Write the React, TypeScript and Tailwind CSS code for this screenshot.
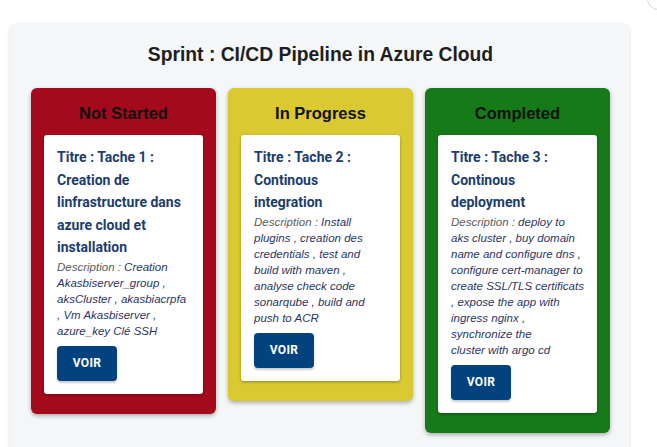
const columns = [
  {
    name: 'Not Started',
    bg: 'bg-[#a50a1c]',
    task: {
      title: 'Titre : Tache 1 : Creation de linfrastructure dans azure cloud et installation',
      desc: ['Creation Akasbiserver_group , aksCluster , akasbiacrpfa , Vm Akasbiserver , azure_key Clé SSH'],
    },
  },
  {
    name: 'In Progress',
    bg: 'bg-[#dbc932]',
    task: {
      title: 'Titre : Tache 2 : Continous integration',
      desc: ['Install plugins , creation des credentials , test and build with maven , analyse check code sonarqube , build and push to ACR'],
    },
  },
  {
    name: 'Completed',
    bg: 'bg-[#167a19]',
    task: {
      title: 'Titre : Tache 3 : Continous deployment',
      // the original text breaks before "cluster"
      desc: [
        'deploy to aks cluster , buy domain name and configure dns , configure cert-manager to create SSL/TLS certificats , expose the app with ingress nginx , synchronize the',
        'cluster with argo cd',
      ],
    },
  },
]

function TaskCard({ title, desc }: { title: string; desc: string[] }) {
  return (
    <div className="bg-white rounded-[3px] shadow-[0_1px_3px_rgba(0,0,0,0.35)] px-[13px] pt-[11px] pb-[13px]">
      <h3 className="text-[14px] leading-[22.6px] font-bold text-[#1b3d6e]">{title}</h3>
      <p className="text-[11.5px] leading-[16px] italic text-[#2b3563] font-['Liberation_Sans',sans-serif]">
        <span className="text-[#5b5b5b]">Description : </span>
        {desc.map((line, i) => (
          <span key={i}>
            {i > 0 && <br />}
            {line}
          </span>
        ))}
      </p>
      <button className="mt-[7px] w-[60px] h-[35px] rounded-[4px] bg-[#02427f] text-white text-[12px] font-bold tracking-[0.3px] shadow-[0_2px_2px_rgba(0,0,0,0.2)]">
        VOIR
      </button>
    </div>
  )
}

export default function App() {
  return (
    <div className="relative min-h-[447px] bg-white overflow-hidden font-['Roboto',sans-serif]">
      <div className="absolute -top-[12px] -right-[12px] w-[22px] h-[22px] rounded-full border border-[#d8d8d8] bg-white" />
      <div className="ml-[10px] mt-[24px] w-[619px] h-[440px] bg-[#f4f6f8] rounded-lg shadow-[0_1px_4px_rgba(0,0,0,0.15)] pt-[19px] pl-[21px] pr-[19px]">
        <h2 className="text-center text-[19.3px] leading-[24px] font-bold text-[#1e1e1e] font-['Liberation_Sans',sans-serif]">
          Sprint : CI/CD Pipeline in Azure Cloud
        </h2>
        <div className="flex items-start gap-3 mt-[21px]">
          {columns.map((col) => (
            <div
              key={col.name}
              className={`${col.bg} w-[185px] shrink-0 rounded-md px-[13px] pt-[15px] pb-[20px] shadow-[0_2px_4px_rgba(0,0,0,0.3)]`}
            >
              <h3 className="text-center text-[16.5px] leading-[20px] font-bold text-[#111] mb-[12px] font-['Liberation_Sans',sans-serif]">
                {col.name}
              </h3>
              <TaskCard title={col.task.title} desc={col.task.desc} />
            </div>
          ))}
        </div>
      </div>
    </div>
  )
}
